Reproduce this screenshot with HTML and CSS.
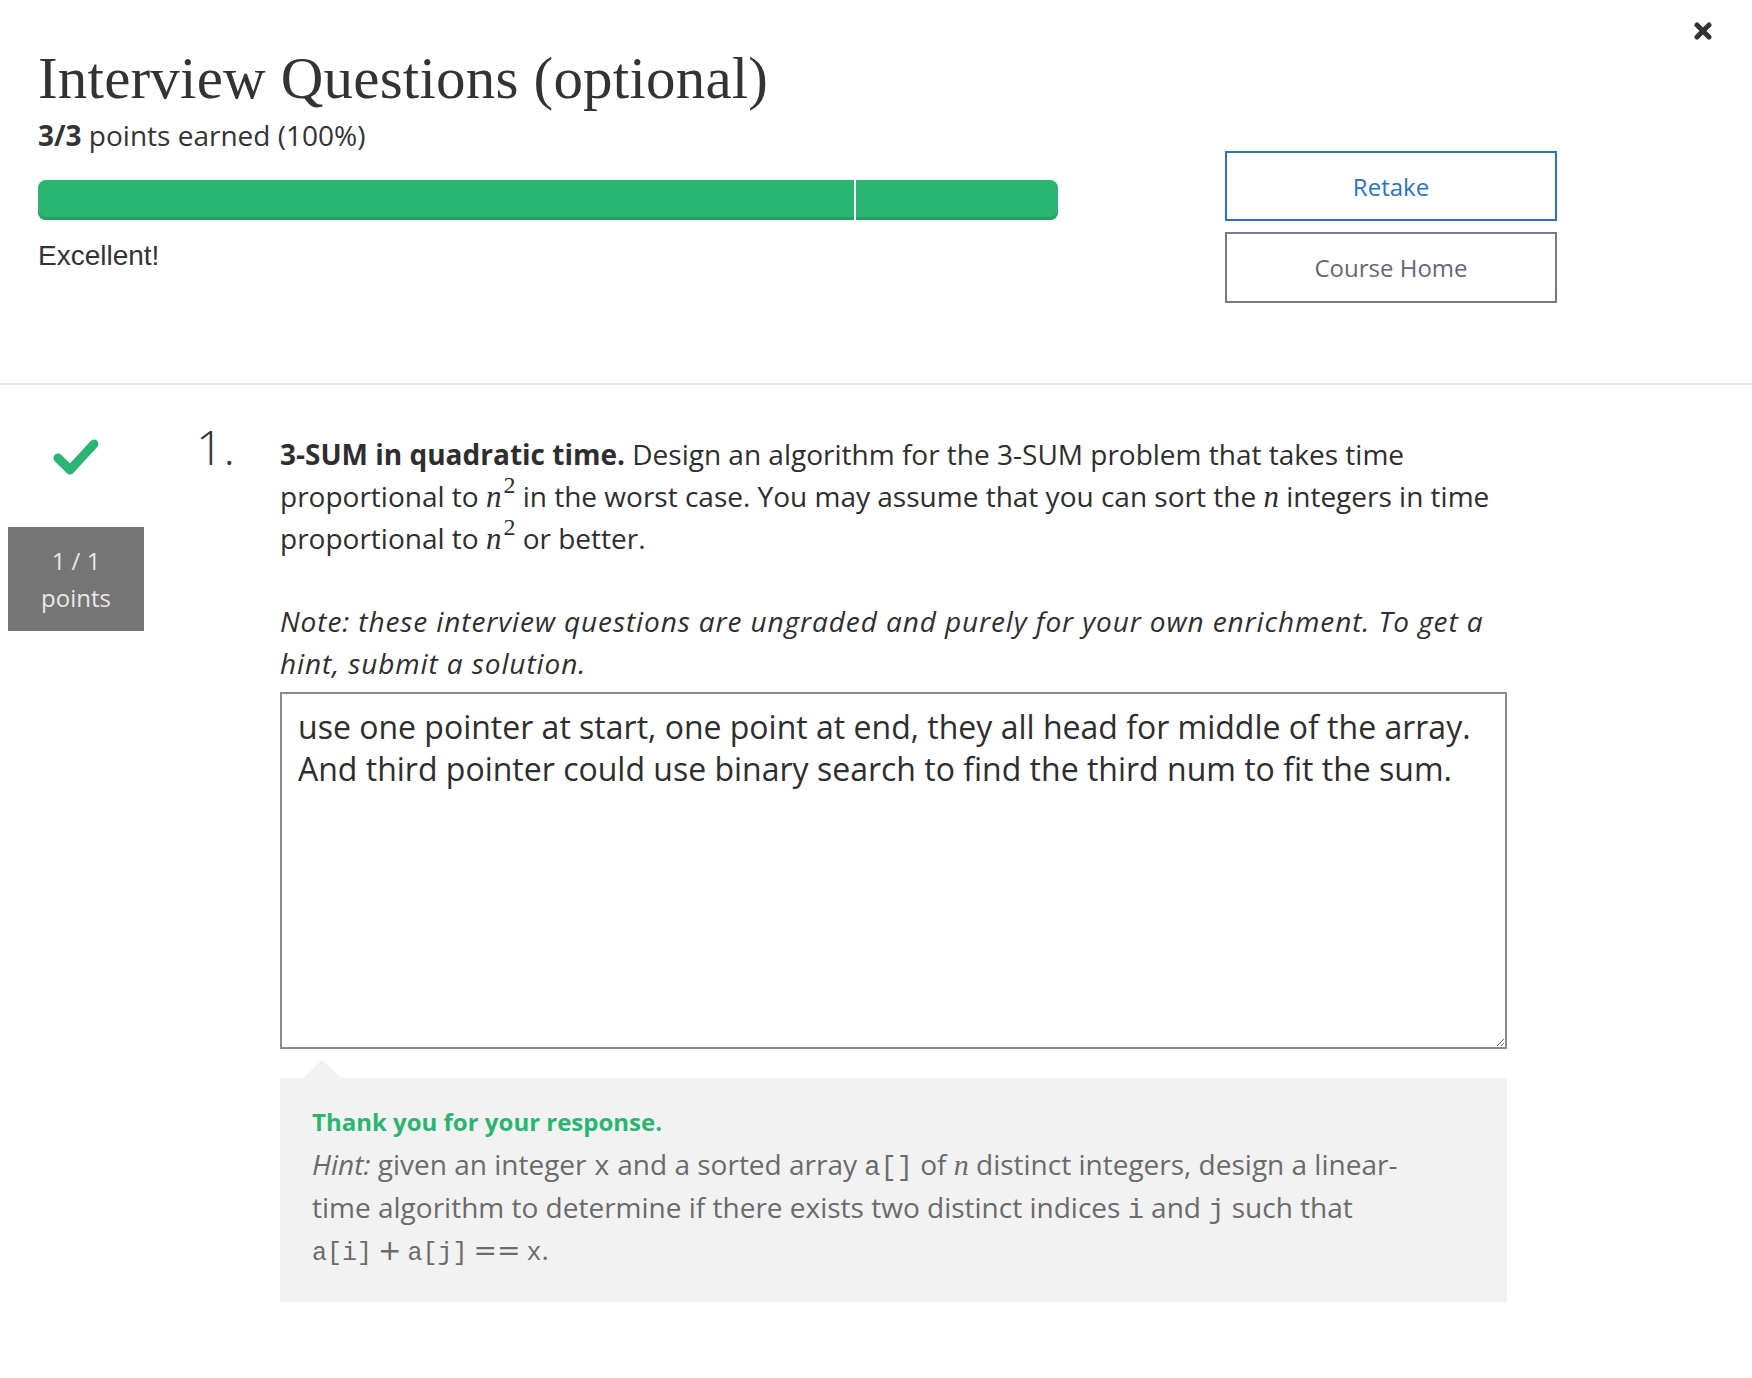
FILE: index.html
```html
<!DOCTYPE html>
<html lang="en">
<head>
<meta charset="utf-8">
<title>Interview Questions (optional)</title>
<link rel="stylesheet" href="styles.css">
</head>
<body>
<div class="page">
  <button class="close" aria-label="Close">
    <svg viewBox="0 0 18 18" width="18" height="18"><path d="M3 3L15 15M15 3L3 15" stroke="#333" stroke-width="5" stroke-linecap="round"/></svg>
  </button>

  <header class="summary">
    <div class="summary-main">
      <h1 class="title">Interview Questions (optional)</h1>
      <div class="score"><strong>3/3</strong> points earned (100%)</div>
      <div class="progress">
        <div class="seg seg-a"></div>
        <div class="seg seg-b"></div>
      </div>
      <div class="verdict">Excellent!</div>
    </div>
    <div class="actions">
      <button class="btn btn-primary">Retake</button>
      <button class="btn btn-secondary">Course Home</button>
    </div>
  </header>

  <section class="question">
    <div class="gutter">
      <svg class="check" viewBox="0 0 46 36" width="46" height="36"><polyline points="5,19 17,31 41,5" fill="none" stroke="#2ab573" stroke-width="9" stroke-linecap="round" stroke-linejoin="round"/></svg>
      <div class="points">
        <div>1 / 1</div>
        <div>points</div>
      </div>
    </div>
    <div class="qnum">1.</div>
    <div class="qbody">
      <p class="prompt"><strong>3-SUM in quadratic time.</strong> Design an algorithm for the 3-SUM problem that takes time proportional to <span class="math"><var>n</var><sup>2</sup></span> in the worst case. You may assume that you can sort the <span class="math"><var>n</var></span> integers in time proportional to <span class="math"><var>n</var><sup>2</sup></span> or better.</p>
      <p class="note">Note: these interview questions are ungraded and purely for your own enrichment. To get a hint, submit a solution.</p>
      <textarea class="answer" readonly>use one pointer at start, one point at end, they all head for middle of the array. And third pointer could use binary search to find the third num to fit the sum.</textarea>
      <div class="feedback">
        <div class="thanks">Thank you for your response.</div>
        <p class="hint"><em>Hint:</em> given an integer <code>x</code> and a sorted array <code>a[]</code> of <span class="math"><var>n</var></span> distinct integers, design a linear-time algorithm to determine if there exists two distinct indices <code>i</code> and <code>j</code> such that <span class="formula"><code>a[i]</code><span class="op">+</span><code>a[j]</code><span class="op">==</span><code>x</code>.</span></p>
      </div>
    </div>
  </section>
</div>
</body>
</html>
```

FILE: styles.css
```css
* {
  box-sizing: border-box;
}

html, body {
  margin: 0;
  padding: 0;
  background: #ffffff;
}

body {
  font-family: "Open Sans", "Noto Sans", sans-serif;
  color: #333333;
}

.page {
  position: relative;
  width: 1752px;
  min-height: 1378px;
}

.close {
  position: absolute;
  top: 22px;
  right: 40px;
  width: 18px;
  height: 18px;
  padding: 0;
  border: 0;
  background: transparent;
  cursor: pointer;
}

.close svg {
  display: block;
}

/* ---------- summary header ---------- */
.summary {
  display: flex;
  align-items: flex-start;
  padding: 43px 0 80px 38px;
  border-bottom: 2px solid #e6e6e6;
}

.summary-main {
  width: 1020px;
}

.title {
  margin: 0;
  font-family: "Liberation Serif", "DejaVu Serif", serif;
  font-weight: normal;
  font-size: 59px;
  line-height: 70px;
  color: #333333;
  letter-spacing: 0.2px;
}

.score {
  margin-top: 4px;
  font-size: 28px;
  line-height: 36px;
  color: #333333;
}

.score strong {
  font-weight: 700;
}

.progress {
  display: flex;
  gap: 2px;
  margin-top: 27px;
  height: 40px;
}

.seg {
  height: 40px;
  background: #2ab573;
  box-shadow: inset 0 -3px 0 #24a066;
}

.seg-a {
  width: 816px;
  border-radius: 8px 0 0 8px;
}

.seg-b {
  flex: 1;
  border-radius: 0 8px 8px 0;
}

.verdict {
  margin-top: 20px;
  font-family: "Liberation Sans", Arial, sans-serif;
  font-size: 28px;
  line-height: 32px;
  color: #333333;
}

.actions {
  display: flex;
  flex-direction: column;
  gap: 11px;
  margin-left: 167px;
  margin-top: 108px;
  width: 332px;
}

.btn {
  display: block;
  width: 332px;
  height: 70px;
  background: #ffffff;
  font-family: "Open Sans", sans-serif;
  font-size: 24px;
  cursor: pointer;
  padding: 0;
}

.btn-primary {
  border: 2px solid #2a73cc;
  color: #2a73cc;
}

.btn-secondary {
  height: 71px;
  border: 2px solid #7d758a;
  color: #6b6478;
}

/* ---------- question ---------- */
.question {
  display: flex;
  align-items: flex-start;
}

.gutter {
  margin-left: 8px;
  width: 136px;
  padding-top: 54px;
  display: flex;
  flex-direction: column;
  align-items: center;
}

.check {
  display: block;
}

.points {
  margin-top: 52px;
  width: 136px;
  padding: 15px 0;
  background: #757575;
  color: #e8e8e8;
  text-align: center;
  font-size: 24px;
  line-height: 37px;
}

.qnum {
  margin-left: 52px;
  width: 84px;
  padding-top: 34px;
  font-size: 48px;
  font-weight: 300;
  line-height: 56px;
  color: #333333;
}

.qbody {
  width: 1227px;
  padding-top: 48px;
}

.prompt {
  margin: 0;
  font-size: 28px;
  line-height: 42px;
  color: #2e2e2e;
}

.prompt strong {
  font-weight: 700;
}

.math {
  font-family: "Liberation Serif", "DejaVu Serif", serif;
  font-size: 31px;
  line-height: 0;
  white-space: nowrap;
}

.math var {
  font-style: italic;
}

.math sup {
  font-size: 24px;
  line-height: 0;
  vertical-align: 14px;
  margin-left: 2px;
}

.note {
  margin: 41px 0 0;
  font-size: 28px;
  line-height: 42px;
  font-style: italic;
  letter-spacing: 0.9px;
  color: #2e2e2e;
}

.answer {
  display: block;
  margin-top: 8px;
  width: 1227px;
  height: 357px;
  padding: 12px 16px;
  border: 2px solid #8c8c8c;
  border-radius: 0;
  font-family: "Open Sans", sans-serif;
  font-size: 32px;
  line-height: 42px;
  color: #2e2e2e;
  background: #ffffff;
  outline: none;
}

.feedback {
  position: relative;
  margin-top: 29px;
  padding: 23px 80px 29px 32px;
  background: #f2f2f2;
}

.feedback::before {
  content: "";
  position: absolute;
  left: 23px;
  top: -18px;
  border-left: 19px solid transparent;
  border-right: 19px solid transparent;
  border-bottom: 18px solid #f2f2f2;
}

.thanks {
  font-size: 24px;
  font-weight: 700;
  line-height: 42px;
  color: #2ab573;
}

.hint {
  margin: 0;
  font-size: 28px;
  line-height: 42.5px;
  color: #6b6b6b;
}

.hint em {
  font-style: italic;
}

.hint code {
  font-family: "Liberation Mono", "DejaVu Sans Mono", monospace;
  font-size: 27px;
  line-height: 0;
}

.hint .math {
  font-size: 30px;
}

.formula {
  white-space: nowrap;
}

.formula code {
  font-size: 25px;
}

.formula .op {
  font-family: "DejaVu Sans", sans-serif;
  font-size: 28px;
  margin: 0 6px;
}
```
